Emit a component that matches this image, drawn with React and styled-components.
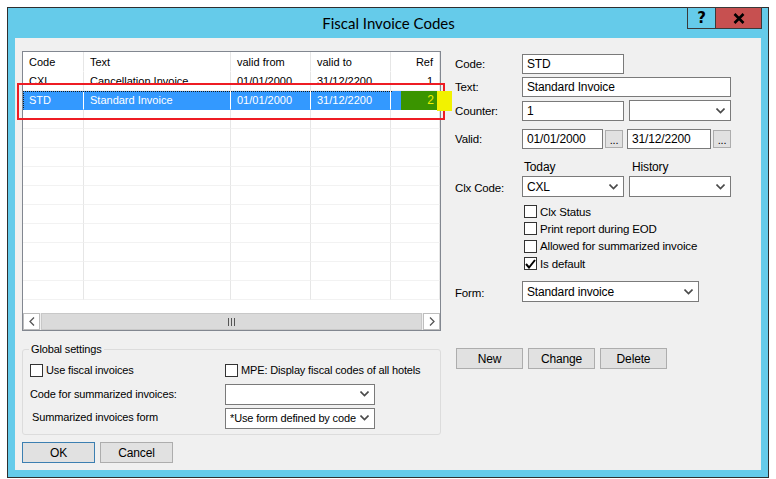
import React from "react";
import styled, { createGlobalStyle } from "styled-components";

const Global = createGlobalStyle`
  html, body { margin: 0; padding: 0; background: #fff; }
  body { font-family: "Liberation Sans", Arial, sans-serif; font-size: 11px; color: #000; letter-spacing: -0.15px; }
  * { box-sizing: border-box; }
`;

const Window = styled.div`
  margin: 7px 0 0 7px;
  width: 762px;
  height: 471px;
  border: 1px solid #2f2f2f;
  background: #65cbea;
  display: flex;
  flex-direction: column;
  padding: 0 7px 7px 7px;
`;

const TitleBar = styled.div`
  height: 30px;
  flex: none;
  display: flex;
  align-items: flex-start;
`;

const Title = styled.div`
  flex: 1;
  text-align: center;
  font-family: "Lato", "Noto Sans", sans-serif;
  font-size: 15px;
  letter-spacing: 0;
  line-height: 30px;
  padding-left: 75px;
  color: #000;
`;

const CaptionButtons = styled.div`
  display: flex;
  margin-top: -1px;
  margin-right: -1px;
`;

const CaptionButton = styled.div`
  height: 22px;
  width: ${(p) => p.$w}px;
  background: ${(p) => (p.$close ? "#c75050" : "#65cbea")};
  border: 1px solid #3a3a3a;
  border-left: ${(p) => (p.$close ? "none" : "1px solid #3a3a3a")};
  display: flex;
  align-items: center;
  justify-content: center;
  font-family: "DejaVu Sans", sans-serif;
  font-weight: bold;
  font-size: 15px;
  color: #000;
`;

const Client = styled.div`
  flex: 1;
  background: #f0f0f0;
  display: flex;
  padding: 13px 0 0 7px;
  position: relative;
`;

const LeftCol = styled.div`
  width: 419px;
  display: flex;
  flex-direction: column;
`;

const RightCol = styled.div`
  margin-left: 14px;
  display: flex;
  flex-direction: column;
  padding-top: 3px;
`;

/* ---------- List view ---------- */
const ListView = styled.div`
  width: 419px;
  height: 280px;
  border: 1px solid #828790;
  background: #fff;
  display: flex;
  flex-direction: column;
  overflow: hidden;
`;

const Rows = styled.div`
  flex: 1;
  overflow: hidden;
`;

const cols = "61px 147px 80px 80px 49px";

const Row = styled.div`
  display: grid;
  grid-template-columns: ${cols};
  height: ${(p) => (p.$header ? 20 : 19)}px;
  background: ${(p) => (p.$selected ? "#3399ff" : "transparent")};
  color: ${(p) => (p.$selected ? "#fff" : "#000")};
  position: relative;
  ${(p) =>
    p.$selected
      ? `&::before { content: ""; position: absolute; left: 0; top: 0; width: 369px; border-top: 1px dotted #1a1a1a; }`
      : ""}
`;

const Cell = styled.div`
  border-right: 1px solid #e6e6e6;
  border-bottom: 1px solid ${(p) => (p.$header ? "transparent" : "#f2f2f2")};
  padding: 0 6px;
  line-height: ${(p) => (p.$header ? 20 : 18)}px;
  font-size: 11px;
  letter-spacing: 0;
  white-space: nowrap;
  overflow: hidden;
  text-align: ${(p) => (p.$right ? "right" : "left")};
  ${(p) => (p.$sel ? "border-right-color: #fff; border-bottom-color: transparent;" : "")}
  ${(p) => (p.$focus ? "border-left: 1px dotted #1a1a1a; padding-left: 5px;" : "")}
  ${(p) => (p.$green ? "background: #3a9400; color: #f2f000; padding-right: 6px; margin-left: 10px; border-right: none; border-bottom: none; font-size: 12px;" : "")}
`;

const ScrollBar = styled.div`
  height: 17px;
  display: flex;
  background: #f0f0f0;
`;

const ScrollArrow = styled.div`
  width: 17px;
  height: 17px;
  background: #fff;
  border: 1px solid #bdbdbd;
  display: flex;
  align-items: center;
  justify-content: center;
  flex: none;
`;

const ScrollThumb = styled.div`
  flex: 1;
  margin: 0 1px;
  background: #dadada;
  border: 1px solid #c8c8c8;
  display: flex;
  align-items: center;
  justify-content: center;
`;

const Grip = styled.div`
  display: flex;
  gap: 2px;
  span { width: 1px; height: 8px; background: #555; display: block; }
`;

/* ---------- Annotations ---------- */
const RedFrame = styled.div`
  position: absolute;
  left: 2px;
  top: 45px;
  width: 428px;
  height: 37px;
  border: 2px solid #ee1c24;
  pointer-events: none;
`;

const YellowMark = styled.div`
  position: absolute;
  left: 422px;
  top: 53px;
  width: 15px;
  height: 20px;
  background: #f2f200;
  pointer-events: none;
`;

/* ---------- Group box ---------- */
const GroupBox = styled.div`
  margin-top: 18px;
  height: 86px;
  border: 1px solid #dcdcdc;
  border-radius: 3px;
  position: relative;
  padding: 9px 7px 0 7px;
  display: grid;
  grid-template-columns: 195px 1fr;
  grid-template-rows: 22px 26px 22px;
`;

const Legend = styled.div`
  position: absolute;
  left: 6px;
  top: -8px;
  padding: 0 2px;
  background: #f0f0f0;
  line-height: 14px;
`;

const CheckRow = styled.label`
  display: flex;
  align-items: center;
  height: ${(p) => p.$h || 17}px;
  gap: 3px;
  white-space: nowrap;
`;

const Box = styled.span`
  width: 13px;
  height: 13px;
  border: 1px solid #333;
  background: #fff;
  display: inline-flex;
  align-items: center;
  justify-content: center;
  flex: none;
`;

const GCell = styled.div`
  display: flex;
  align-items: center;
  padding-left: ${(p) => p.$pl || 0}px;
  padding-bottom: ${(p) => p.$pb || 0}px;
`;

/* ---------- Buttons ---------- */
const ButtonRow = styled.div`
  display: flex;
  gap: 5px;
  margin-top: ${(p) => p.$mt}px;
  margin-left: ${(p) => p.$ml || 0}px;
`;

const Button = styled.div`
  width: ${(p) => p.$w}px;
  height: 21px;
  background: #e1e1e1;
  border: 1px solid ${(p) => (p.$default ? "#3c7fb1" : "#adadad")};
  display: flex;
  align-items: center;
  justify-content: center;
  font-size: 12px;
`;

/* ---------- Form ---------- */
const FormGrid = styled.div`
  display: grid;
  grid-template-columns: 67px auto;
  row-gap: 3px;
  align-items: center;
  margin-top: ${(p) => p.$mt || 0}px;
`;

const Label = styled.div`
  font-size: 11.5px;
  line-height: 14px;
  padding-top: ${(p) => p.$pt || 0}px;
`;

const Field = styled.div`
  display: flex;
  align-items: center;
  gap: ${(p) => p.$gap ?? 5}px;
`;

const TextBox = styled.div`
  width: ${(p) => p.$w}px;
  height: 20px;
  background: #fff;
  border: 1px solid #7a7a7a;
  padding: 0 4px;
  line-height: 18px;
  font-size: 12px;
  white-space: nowrap;
  overflow: hidden;
`;

const SelectBox = styled.div`
  width: ${(p) => p.$w}px;
  height: 21px;
  background: #fff;
  border: 1px solid #7a7a7a;
  display: flex;
  align-items: center;
  gap: 2px;
  padding: 0 5px 0 4px;
  font-size: ${(p) => p.$fs || 12}px;
  white-space: nowrap;
  span { flex: 1; overflow: hidden; }
  svg { flex: none; }
`;

const DotButton = styled.div`
  width: 18px;
  height: 18px;
  background: #e1e1e1;
  border: 1px solid #adadad;
  font-size: 11px;
  display: flex;
  align-items: flex-end;
  justify-content: center;
  padding-bottom: 3px;
  line-height: 8px;
  margin-right: ${(p) => p.$mr || 0}px;
`;

const SubHeads = styled.div`
  display: flex;
  margin-left: 69px;
  margin-top: 11px;
  font-size: 12px;
  height: 16px;
  span:first-child { width: 108px; }
`;

const Checks = styled.div`
  margin-left: 69px;
  margin-top: 6px;
  display: flex;
  flex-direction: column;
  font-size: 11.5px;
`;

const Chevron = () => (
  <svg width="9" height="6" viewBox="0 0 9 6">
    <path d="M0.5 0.5 L4.5 4.5 L8.5 0.5" fill="none" stroke="#4a4a4a" strokeWidth="1.6" />
  </svg>
);

const Select = ({ w, fs, children }) => (
  <SelectBox $w={w} $fs={fs}>
    <span>{children}</span>
    <Chevron />
  </SelectBox>
);

const Check = ({ checked, children, h }) => (
  <CheckRow $h={h}>
    <Box>
      {checked && (
        <svg width="11" height="10" viewBox="0 0 11 10">
          <path d="M1 5 L4 8.5 L10 1" fill="none" stroke="#000" strokeWidth="2" />
        </svg>
      )}
    </Box>
    <span>{children}</span>
  </CheckRow>
);

const rows = [
  ["CXL", "Cancellation Invoice", "01/01/2000", "31/12/2200", "1"],
  ["STD", "Standard Invoice", "01/01/2000", "31/12/2200", "2"],
];

export default function App() {
  return (
    <>
      <Global />
      <Window>
        <TitleBar>
          <Title>Fiscal Invoice Codes</Title>
          <CaptionButtons>
            <CaptionButton $w={29}>?</CaptionButton>
            <CaptionButton $w={46} $close>
              <svg width="12" height="11" viewBox="0 0 12 11">
                <path d="M1.5 1 L10.5 10 M10.5 1 L1.5 10" stroke="#000" strokeWidth="2.6" />
              </svg>
            </CaptionButton>
          </CaptionButtons>
        </TitleBar>
        <Client>
          <LeftCol>
            <ListView>
              <Row $header>
                <Cell $header>Code</Cell>
                <Cell $header>Text</Cell>
                <Cell $header>valid from</Cell>
                <Cell $header>valid to</Cell>
                <Cell $header $right>Ref</Cell>
              </Row>
              <Rows>
                {rows.map((r, i) => {
                  const sel = i === 1;
                  return (
                    <Row key={i} $selected={sel}>
                      <Cell $sel={sel} $focus={sel}>{r[0]}</Cell>
                      <Cell $sel={sel}>{r[1]}</Cell>
                      <Cell $sel={sel}>{r[2]}</Cell>
                      <Cell $sel={sel}>{r[3]}</Cell>
                      <Cell $right $green={sel}>{r[4]}</Cell>
                    </Row>
                  );
                })}
                {Array.from({ length: 10 }).map((_, i) => (
                  <Row key={"e" + i}>
                    <Cell />
                    <Cell />
                    <Cell />
                    <Cell />
                    <Cell />
                  </Row>
                ))}
              </Rows>
              <ScrollBar>
                <ScrollArrow>
                  <svg width="6" height="9" viewBox="0 0 6 9">
                    <path d="M5 0.5 L1 4.5 L5 8.5" fill="none" stroke="#555" strokeWidth="1.3" />
                  </svg>
                </ScrollArrow>
                <ScrollThumb>
                  <Grip><span /><span /><span /></Grip>
                </ScrollThumb>
                <ScrollArrow>
                  <svg width="6" height="9" viewBox="0 0 6 9">
                    <path d="M1 0.5 L5 4.5 L1 8.5" fill="none" stroke="#555" strokeWidth="1.3" />
                  </svg>
                </ScrollArrow>
              </ScrollBar>
            </ListView>
            <GroupBox>
              <Legend>Global settings</Legend>
              <GCell><Check h={22}>Use fiscal invoices</Check></GCell>
              <GCell><Check h={22}>MPE: Display fiscal codes of all hotels</Check></GCell>
              <GCell>Code for summarized invoices:</GCell>
              <GCell><Select w={150} fs={11}></Select></GCell>
              <GCell $pl={2} $pb={2}>Summarized invoices form</GCell>
              <GCell><Select w={150} fs={11}>*Use form defined by code</Select></GCell>
            </GroupBox>
            <ButtonRow $mt={7}>
              <Button $w={73} $default>OK</Button>
              <Button $w={73}>Cancel</Button>
            </ButtonRow>
          </LeftCol>
          <RightCol>
            <FormGrid>
              <Label>Code:</Label>
              <TextBox $w={102}>STD</TextBox>
              <Label>Text:</Label>
              <TextBox $w={209}>Standard Invoice</TextBox>
              <Label>Counter:</Label>
              <Field>
                <TextBox $w={102}>1</TextBox>
                <Select w={102}></Select>
              </Field>
            </FormGrid>
            <FormGrid $mt={8}>
              <Label>Valid:</Label>
              <Field $gap={2}>
                <TextBox $w={81}>01/01/2000</TextBox>
                <DotButton $mr={2}>...</DotButton>
                <TextBox $w={84}>31/12/2200</TextBox>
                <DotButton>...</DotButton>
              </Field>
            </FormGrid>
            <SubHeads>
              <span>Today</span>
              <span>History</span>
            </SubHeads>
            <FormGrid>
              <Label $pt={2}>Clx Code:</Label>
              <Field>
                <Select w={102}>CXL</Select>
                <Select w={102}></Select>
              </Field>
            </FormGrid>
            <Checks>
              <Check h={17}>Clx Status</Check>
              <Check h={17}>Print report during EOD</Check>
              <Check h={18}>Allowed for summarized invoice</Check>
              <Check h={17} checked>Is default</Check>
            </Checks>
            <FormGrid $mt={9}>
              <Label $pt={2}>Form:</Label>
              <Select w={177}>Standard invoice</Select>
            </FormGrid>
            <ButtonRow $mt={46} $ml={1}>
              <Button $w={67}>New</Button>
              <Button $w={67}>Change</Button>
              <Button $w={67}>Delete</Button>
            </ButtonRow>
          </RightCol>
          <RedFrame />
          <YellowMark />
        </Client>
      </Window>
    </>
  );
}
